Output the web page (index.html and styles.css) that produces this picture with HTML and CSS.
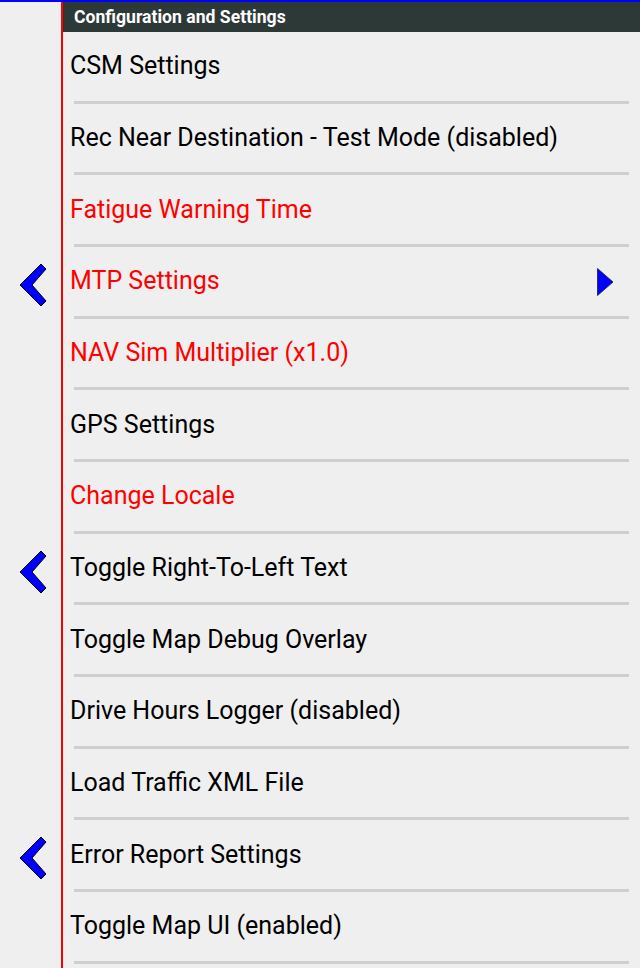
FILE: index.html
```html
<!DOCTYPE html>
<html>
<head>
<meta charset="utf-8">
<link rel="stylesheet" href="styles.css">
</head>
<body>
<div class="topbar"></div>
<div class="screen">
  <div class="row head">
    <div class="gutter"></div>
    <div class="panel"><div class="title">Configuration and Settings</div></div>
  </div>

  <div class="row item">
    <div class="gutter"></div>
    <div class="panel"><div class="cell"><span class="label">CSM Settings</span></div><div class="sep"></div></div>
  </div>
  <div class="row item">
    <div class="gutter"></div>
    <div class="panel"><div class="cell"><span class="label">Rec Near Destination - Test Mode (disabled)</span></div><div class="sep"></div></div>
  </div>
  <div class="row item">
    <div class="gutter"></div>
    <div class="panel"><div class="cell"><span class="label red">Fatigue Warning Time</span></div><div class="sep"></div></div>
  </div>
  <div class="row item">
    <div class="gutter">
      <svg class="chev" viewBox="0 0 28 46" width="28" height="46"><polygon points="22,2 27,7 13,23 27,39 22,44 1,23"/></svg>
    </div>
    <div class="panel"><div class="cell"><span class="label red">MTP Settings</span>
      <svg class="arrow" viewBox="0 0 17 28" width="17" height="28"><polygon points="0.5,0.5 16,14 0.5,27.5"/></svg>
    </div><div class="sep"></div></div>
  </div>
  <div class="row item">
    <div class="gutter"></div>
    <div class="panel"><div class="cell"><span class="label red">NAV Sim Multiplier (x1.0)</span></div><div class="sep"></div></div>
  </div>
  <div class="row item">
    <div class="gutter"></div>
    <div class="panel"><div class="cell"><span class="label">GPS Settings</span></div><div class="sep"></div></div>
  </div>
  <div class="row item">
    <div class="gutter"></div>
    <div class="panel"><div class="cell"><span class="label red">Change Locale</span></div><div class="sep"></div></div>
  </div>
  <div class="row item">
    <div class="gutter">
      <svg class="chev" viewBox="0 0 28 46" width="28" height="46"><polygon points="22,2 27,7 13,23 27,39 22,44 1,23"/></svg>
    </div>
    <div class="panel"><div class="cell"><span class="label">Toggle Right-To-Left Text</span></div><div class="sep"></div></div>
  </div>
  <div class="row item">
    <div class="gutter"></div>
    <div class="panel"><div class="cell"><span class="label">Toggle Map Debug Overlay</span></div><div class="sep"></div></div>
  </div>
  <div class="row item">
    <div class="gutter"></div>
    <div class="panel"><div class="cell"><span class="label">Drive Hours Logger (disabled)</span></div><div class="sep"></div></div>
  </div>
  <div class="row item">
    <div class="gutter"></div>
    <div class="panel"><div class="cell"><span class="label">Load Traffic XML File</span></div><div class="sep"></div></div>
  </div>
  <div class="row item">
    <div class="gutter">
      <svg class="chev" viewBox="0 0 28 46" width="28" height="46"><polygon points="22,2 27,7 13,23 27,39 22,44 1,23"/></svg>
    </div>
    <div class="panel"><div class="cell"><span class="label">Error Report Settings</span></div><div class="sep"></div></div>
  </div>
  <div class="row item">
    <div class="gutter"></div>
    <div class="panel"><div class="cell"><span class="label">Toggle Map UI (enabled)</span></div><div class="sep"></div></div>
  </div>
  <div class="row fill">
    <div class="gutter"></div>
    <div class="panel"></div>
  </div>
</div>
</body>
</html>
```

FILE: styles.css
```css
html, body {
  margin: 0;
  padding: 0;
  background: #efefef;
  font-family: Roboto, "Noto Sans", "DejaVu Sans", sans-serif;
  overflow: hidden;
}

.topbar {
  height: 2px;
  background: #0000ff;
}

.screen {
  height: 966px;
  display: flex;
  flex-direction: column;
}

.row {
  display: grid;
  grid-template-columns: 61px 1fr;
}

.panel {
  border-left: 2px solid #ff0000;
}

.head .panel {
  height: 30px;
  background: #2c3937;
  display: flex;
  align-items: center;
}

.title {
  padding-left: 11px;
  padding-bottom: 1px;
  color: #ffffff;
  font-weight: 700;
  font-size: 17.6px;
}

.cell {
  height: 68.67px;
  display: flex;
  align-items: center;
  padding-left: 7px;
}

.label {
  flex: 1;
  font-size: 25px;
  color: #000000;
  white-space: nowrap;
  padding-bottom: 1px;
}

.label.red {
  color: #ff0000;
}

.sep {
  height: 3px;
  margin: 0 11px;
  background: #cfcfcf;
}

.gutter {
  display: flex;
  align-items: flex-start;
}

.chev {
  display: block;
  margin-left: 19px;
  margin-top: 15px;
}

.chev polygon {
  fill: #0000ff;
  stroke: #000000;
  stroke-width: 1;
  stroke-linejoin: miter;
}

.arrow {
  display: block;
  margin-right: 26px;
  margin-top: 2px;
}

.arrow polygon {
  fill: #0000ff;
  stroke: #1a1a40;
  stroke-width: 0.8;
}

.fill {
  flex: 1;
}
```
